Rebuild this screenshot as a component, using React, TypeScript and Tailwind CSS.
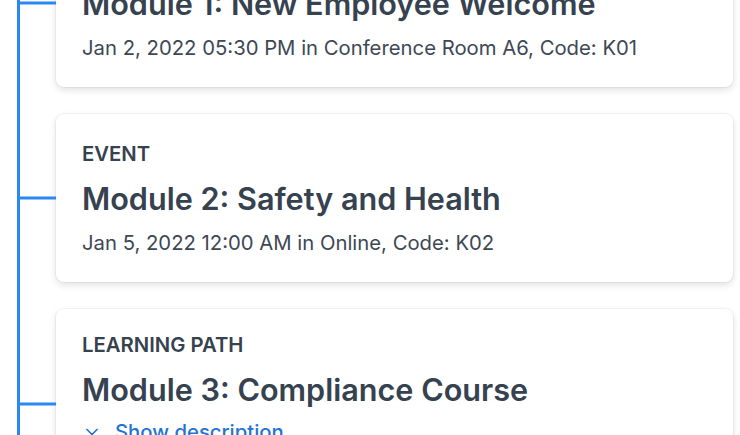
import { ChevronDown } from "lucide-react";

interface ModuleItem {
  kind: string;
  title: string;
  details?: string;
  hasDescription?: boolean;
  padTop: string;
}

const MODULES: ModuleItem[] = [
  {
    kind: "COURSE",
    title: "Module 1: New Employee Welcome",
    details: "Jan 2, 2022 05:30 PM in Conference Room A6, Code: K01",
    padTop: "pt-[26px]",
  },
  {
    kind: "EVENT",
    title: "Module 2: Safety and Health",
    details: "Jan 5, 2022 12:00 AM in Online, Code: K02",
    padTop: "pt-[26px]",
  },
  {
    kind: "LEARNING PATH",
    title: "Module 3: Compliance Course",
    details: "Jan 9, 2022 09:00 AM in Online, Code: K03",
    hasDescription: true,
    padTop: "pt-[22px]",
  },
];

const ModuleCard = ({ kind, title, details, hasDescription, padTop }: ModuleItem) => {
  return (
    <div className="relative">
      {/* connector from the timeline to the card */}
      <div className="absolute -left-[36px] top-1/2 -translate-y-1/2 w-[36px] h-[3px] bg-[#2a88f2]" />
      <div
        className={`rounded-lg bg-white ring-1 ring-black/[0.04] shadow-[0_3px_7px_rgba(15,23,42,0.13)] px-[26px] ${padTop} pb-[25px]`}
      >
        <div className="text-[20.3px] leading-[28px] font-semibold text-[#36424f]">{kind}</div>
        <div className="mt-[13px] text-[30.6px] leading-[36px] font-semibold text-[#36424f]">
          {title}
        </div>
        {hasDescription && (
          <div className="mt-[10px] flex items-center gap-[13px] text-[20.3px] leading-[28px] font-medium text-[#1f74d8]">
            <ChevronDown size={20} strokeWidth={2} />
            <span>Show description</span>
          </div>
        )}
        {details && (
          <div
            className={`${hasDescription ? "mt-0" : "mt-[12px]"} text-[20.3px] leading-[28px] text-[#3d4854]`}
          >
            {details}
          </div>
        )}
      </div>
    </div>
  );
};

export default function App() {
  return (
    <div
      className="w-[740px] h-[435px] overflow-hidden bg-white"
      style={{ fontFamily: "Inter, 'Noto Sans', sans-serif" }}
    >
      <div className="-mt-[81px] ml-[17px] mr-[7px] border-l-[3px] border-[#2a88f2] pl-[36px]">
        <div className="flex flex-col gap-[27px] pb-10">
          {MODULES.map((m, i) => (
            <ModuleCard key={i} {...m} />
          ))}
        </div>
      </div>
    </div>
  );
}
